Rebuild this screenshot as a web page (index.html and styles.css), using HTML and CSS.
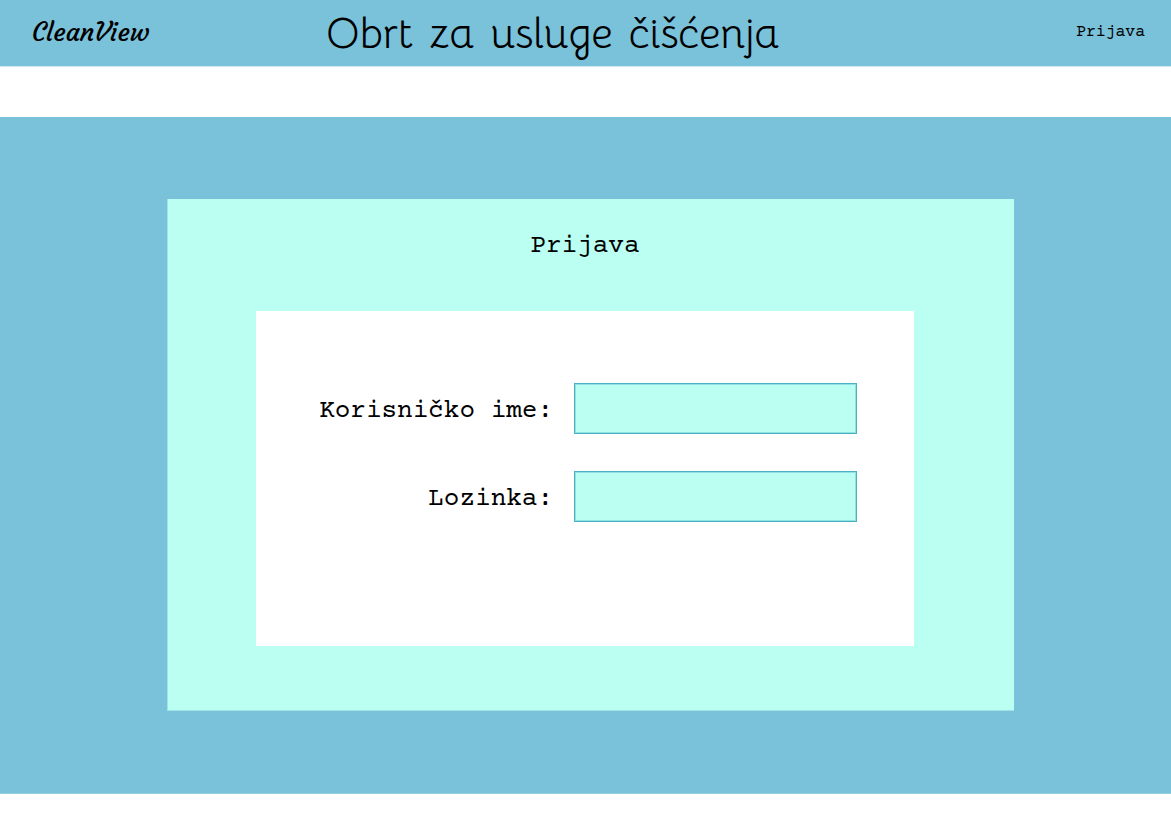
FILE: index.html
```html
<!DOCTYPE html>
<html lang="hr">
<head>
<meta charset="utf-8">
<title>CleanView – Prijava</title>
<link rel="stylesheet" href="styles.css">
</head>
<body>
<header class="header">
  <a class="logo">CleanView</a>
  <h1 class="title">Obrt za usluge čišćenja</h1>
  <a class="login-link">Prijava</a>
</header>
<main class="main">
  <section class="card">
    <h2 class="card-title">Prijava</h2>
    <form class="form">
      <label class="label" for="user">Korisničko ime:</label>
      <input class="field" id="user" type="text">
      <label class="label" for="pass">Lozinka:</label>
      <input class="field" id="pass" type="password">
    </form>
  </section>
</main>
</body>
</html>
```

FILE: styles.css
```css
* { box-sizing: border-box; }
body {
  margin: 0;
  background: #fff;
  color: #000;
  font-family: "Courier Prime", "Liberation Mono", monospace;
}
.header {
  display: grid;
  grid-template-columns: 326px 1fr auto;
  height: 67px;
  padding-right: 26px;
  background: #7ac1da;
  border-bottom: 1px solid #cde8f1;
}
.logo {
  padding-left: 32px;
  font: 400 26.2px/64px Courgette, Lato, sans-serif;
  white-space: nowrap;
}
.title {
  margin: 0;
  font: 400 42.2px/67px Bellota, Lato, sans-serif;
  font-kerning: none;
  word-spacing: 4.4px;
  white-space: nowrap;
}
.login-link {
  font-size: 16.4px;
  line-height: 66px;
}
.main {
  height: 677px;
  margin-top: 50px;
  padding: 82px 157px 0 167px;
  background: #7ac1da;
  border-bottom: 1px solid #93cde0;
}
.card {
  height: 512px;
  padding: 0 100px 0 88px;
  background: #bafff1;
  border: solid #9fe3e9;
  border-width: 0 0 1px 1px;
}
.card-title {
  height: 112px;
  margin: 0;
  font-size: 26px;
  font-weight: 400;
  line-height: 96px;
  text-align: center;
}
.form {
  display: grid;
  grid-template-columns: 297px 283px;
  grid-auto-rows: 51px;
  gap: 37px 21px;
  height: 335px;
  padding-top: 72px;
  background: #fff;
}
.label {
  font-size: 26px;
  line-height: 57px;
  text-align: right;
  white-space: nowrap;
}
.field {
  width: 100%;
  height: 51px;
  padding: 0 12px;
  border: 1px solid #4ab0c3;
  border-radius: 0;
  outline: 0;
  background: #bafff1;
  box-shadow: inset 0 0 0 1px #91e1e1;
  font: inherit;
}
```
